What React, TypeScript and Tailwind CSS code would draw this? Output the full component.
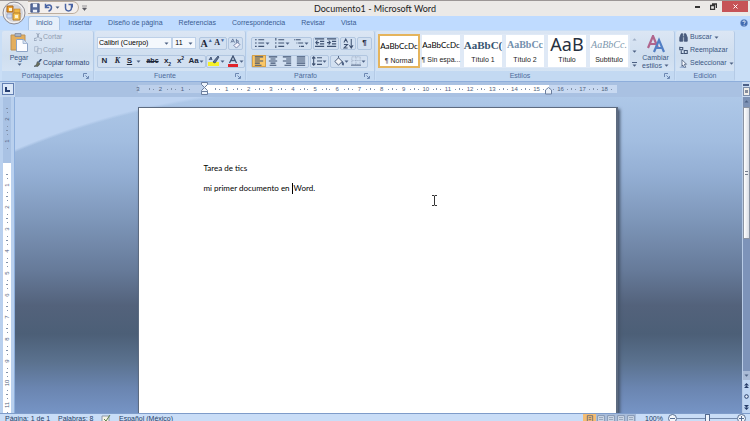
import type { ReactNode } from "react";

const tabs = [
  "Insertar",
  "Diseño de página",
  "Referencias",
  "Correspondencia",
  "Revisar",
  "Vista",
];

const styles = [
  { sample: "AaBbCcDc", name: "¶ Normal", look: "font-['Lato'] text-[8px] text-black" },
  { sample: "AaBbCcDc", name: "¶ Sin espa...", look: "font-['Lato'] text-[8px] text-black" },
  { sample: "AaBbC(", name: "Título 1", look: "font-['Liberation_Serif'] text-[11px] font-bold text-[#36546f]" },
  { sample: "AaBbCc", name: "Título 2", look: "font-['Liberation_Serif'] text-[10px] font-bold text-[#7390ad]" },
  { sample: "AaB", name: "Título", look: "font-['Noto_Sans'] text-[18px] text-[#26303f]" },
  { sample: "AaBbCc.", name: "Subtítulo", look: "font-['Liberation_Serif'] text-[10px] italic text-[#7d97ae]" },
];

const verticalUnits = [1, 2, 3, 4, 5, 6, 7, 8, 9, 10, 11];
const horizontalUnits = [1, 2, 3, 4, 5, 6, 7, 8, 9, 10, 11, 12, 13, 14, 15];

const Arrow = () => (
  <svg width="5" height="3" viewBox="0 0 5 3" className="shrink-0" aria-hidden="true">
    <path d="M0.5 0.5h4L2.5 2.7z" fill="#4d6184" />
  </svg>
);

const Icon = ({ size = 12, children }: { size?: number; children: ReactNode }) => (
  <svg
    width={size}
    height={size}
    viewBox="0 0 12 12"
    fill="none"
    stroke="#3f5272"
    className="shrink-0"
    aria-hidden="true"
  >
    {children}
  </svg>
);

type ToolProps = {
  label: string;
  width?: string;
  arrow?: boolean;
  active?: boolean;
  children: ReactNode;
};

const Tool = ({ label, width = "w-[13px]", arrow, active, children }: ToolProps) => (
  <button
    aria-label={label}
    className={`flex h-3 shrink-0 items-center justify-center text-[8px] font-bold text-[#1c2638] ${width} ${
      active ? "border border-[#d3a04c] bg-[#fbc766]" : ""
    }`}
  >
    {children}
    {arrow && <Arrow />}
  </button>
);

const ToolSet = ({ children }: { children: ReactNode }) => (
  <div className="flex h-[13px] shrink-0 items-center rounded-[2px] border border-[#b1c6e0] bg-[#d2e0f1]">
    {children}
  </div>
);

type GroupProps = {
  title: string;
  width: string;
  launcher?: boolean;
  children: ReactNode;
};

const Group = ({ title, width, launcher, children }: GroupProps) => (
  <section
    className={`flex flex-col rounded-[2px] border-r border-[#b4cae5] bg-linear-to-b from-[#dbe6f4] via-[#cfdeef] to-[#d9e7f7] ${width}`}
  >
    <div className="h-10 px-0.5">{children}</div>
    <footer className="flex h-[10px] items-center bg-[#c3d9f2] text-[#4c6a9a]">
      <span className="grow text-center">{title}</span>
      {launcher && (
        <button aria-label={`Opciones de ${title}`} className="mr-1">
          <svg width="6" height="6" viewBox="0 0 6 6" fill="none" stroke="#6d88b2">
            <path d="M.5 4V.5H4M2.5 2.5 5 5M5.5 3v2.5H3" />
          </svg>
        </button>
      )}
    </footer>
  </section>
);

const Lines = ({ d }: { d: string }) => (
  <Icon size={10}>
    <path d={d} strokeWidth="1.3" />
  </Icon>
);

const TitleBar = () => (
  <header className="flex h-4 items-start border-t border-[#9b9696] bg-[#ebe9e7]">
    <div className="flex w-1/4 items-center pl-7">
      <div className="flex h-[13px] w-[51px] items-center gap-1 rounded-r-full border border-l-0 border-[#bcae9f] bg-[#f3efed] pl-0.5">
        <button aria-label="Guardar">
          <Icon size={10}>
            <path d="M1 1h10v10H1z" fill="#596d9d" stroke="#3f4f7c" />
            <path d="M3.5 1h5v4h-5zM3.5 8h5v3h-5z" fill="#edf1fa" stroke="none" />
          </Icon>
        </button>
        <button aria-label="Deshacer" className="flex items-center gap-0.5">
          <Icon size={9}>
            <path d="M2 1v5h5M2 6c2-5 8-4 8 0 0 2-1 4-4 5" stroke="#4b65a4" strokeWidth="2" />
          </Icon>
          <Arrow />
        </button>
        <button aria-label="Rehacer">
          <Icon size={9}>
            <path d="M2 1v5c0 6 8 6 8 0V2M6 2h5v4" stroke="#4b65a4" strokeWidth="2" />
          </Icon>
        </button>
      </div>
      <button aria-label="Personalizar barra" className="ml-[3px]">
        <svg width="5" height="6" viewBox="0 0 5 6">
          <path d="M0 1h5M0.5 3h4L2.5 5.5z" stroke="#5b5b63" strokeWidth=".6" fill="#5b5b63" />
        </svg>
      </button>
    </div>
    <h1 className="grow text-center font-['Lato',sans-serif] text-[9px] leading-[15px] text-[#222]">
      Documento1 - Microsoft Word
    </h1>
    <div className="flex w-1/4 justify-end pr-0.5">
      <button aria-label="Minimizar" className="flex w-4 justify-center pt-[5px]">
        <span className="h-0.5 w-[5px] bg-[#333]" />
      </button>
      <button aria-label="Restaurar" className="flex w-[17px] justify-center pt-0.5">
        <svg width="7" height="7" viewBox="0 0 7 7" fill="none" stroke="#333">
          <path d="M.5 2.5h4v4h-4zM2 1h4.5v4" strokeWidth="1.3" />
        </svg>
      </button>
      <button aria-label="Cerrar" className="flex h-[11px] w-[26px] items-center justify-center bg-[#c65357]">
        <svg width="5" height="5" viewBox="0 0 5 5" stroke="#fff">
          <path d="M.5.5l4 4M4.5.5l-4 4" />
        </svg>
      </button>
    </div>
  </header>
);

const OfficeButton = () => (
  <button aria-label="Botón de Office" className="absolute top-px left-0.5">
    <svg width="24" height="24" viewBox="0 0 24 24" fill="none">
      <circle cx="12" cy="12" r="11" fill="#e4e3e5" stroke="#8d8c94" />
      <circle cx="12" cy="12" r="9.5" fill="#d4d4da" stroke="#f8f6f4" />
      <path d="M5 5h6v6H5z" fill="#eda42c" stroke="#a8621a" />
      <path d="M7 7h3v3H7z" fill="#fdf0cf" />
      <path d="M12 8h6v5h-6z" fill="#efb642" stroke="#c0802c" strokeWidth=".6" />
      <path d="M5 13h5v4H5z" fill="#d0dcf2" stroke="#8798bd" strokeWidth=".6" />
      <path d="M11 12h7v7h-7z" fill="#f5c456" stroke="#b27a29" />
      <path d="M13 14h3v3h-3z" fill="#fff2cc" />
    </svg>
  </button>
);

const TabBar = () => (
  <nav className="flex h-[14px] items-stretch bg-[#bfdbff] pl-7 text-[#3a5b92]">
    <button className="rounded-t-[3px] border border-b-0 border-[#a9c4e5] bg-[#e6effa] px-[7px]">
      Inicio
    </button>
    {tabs.map((tab) => (
      <button key={tab} className="px-2">
        {tab}
      </button>
    ))}
    <button aria-label="Ayuda" className="mr-0.5 ml-auto">
      <svg width="8" height="8" viewBox="0 0 8 8">
        <circle cx="4" cy="4" r="3.5" fill="#406bb2" stroke="#7896c6" strokeWidth=".5" />
        <path d="M2.8 3c0-1.6 2.5-1.5 2.5 0 0 .8-1.2.8-1.2 1.8M4.1 5.8v.8" stroke="#fff" fill="none" strokeWidth=".9" />
      </svg>
    </button>
  </nav>
);

const Clipboard = () => (
  <Group title="Portapapeles" width="w-[92px]" launcher>
    <div className="flex h-full">
      <button className="flex w-[30px] shrink-0 flex-col items-center gap-px pt-0.5 text-[#3a5682]">
        <svg width="18" height="19" viewBox="0 0 18 19" aria-hidden="true">
          <path d="M1 2h14v15H1z" fill="#e3ae5d" stroke="#bc9258" />
          <path d="M5 0.5h6v3H5z" fill="#a9b3c3" stroke="#788397" strokeWidth=".7" />
          <path d="M6.500 6.500h7l4 4v8h-11z" fill="#fbfcff" stroke="#8da4c6" />
          <path d="M13 6.500v4h4.500" fill="#d5e0f0" stroke="#8da4c6" strokeWidth=".7" />
        </svg>
        <span className="leading-[9px]">Pegar</span>
        <Arrow />
      </button>
      <div className="flex flex-col whitespace-nowrap">
        <button className="flex h-[13px] items-center gap-px text-[#8f9db2]">
          <Icon size={8}>
            <path d="M8 0 4 8M4 0l4 8M3 8a2 2 0 1 0 1 2M9 8a2 2 0 1 1-1 2" stroke="#8f9db2" strokeWidth="1.3" />
          </Icon>
          Cortar
        </button>
        <button className="flex h-[13px] items-center gap-px text-[#8f9db2]">
          <Icon size={8}>
            <path d="M1 1h5v7H1zM5 4h6v7H5z" fill="#dce5f1" stroke="#9cabc1" />
          </Icon>
          Copiar
        </button>
        <button className="flex h-[13px] items-center gap-px text-[#2c4674]">
          <Icon size={8}>
            <path d="M11 0 7 5" stroke="#3a5379" strokeWidth="2.5" />
            <path d="M5 4l4 3-3 4H0c3-1 4-3 5-7z" fill="#6b715c" stroke="#454f54" />
          </Icon>
          Copiar formato
        </button>
      </div>
    </div>
  </Group>
);

const FontGroup = () => (
  <Group title="Fuente" width="w-[151px]" launcher>
    <div className="flex h-full flex-col justify-between pt-1.5 pb-[3px]">
      <div className="flex items-center">
        <label className="flex h-3 w-20 items-center border border-[#bdd0e8] bg-[#f4f8fd] pr-0.5 text-black">
          <input
            aria-label="Fuente"
            defaultValue="Calibri (Cuerpo)"
            className="w-full min-w-0 bg-transparent pl-px outline-none"
          />
          <Arrow />
        </label>
        <label className="flex h-3 w-[25px] items-center border border-[#bdd0e8] bg-[#f4f8fd] pr-0.5 text-black">
          <input
            aria-label="Tamaño de fuente"
            defaultValue="11"
            className="w-full min-w-0 bg-transparent pl-0.5 outline-none"
          />
          <Arrow />
        </label>
        <div className="ml-[3px] flex gap-px">
          <ToolSet>
            <Tool label="Agrandar fuente">
              <span className="font-['Liberation_Serif'] text-[10px]">A</span>
              <span className="self-start text-[5px] leading-[6px] text-[#46669c]">▲</span>
            </Tool>
            <Tool label="Encoger fuente">
              <span className="font-['Liberation_Serif'] text-[8px]">A</span>
              <span className="self-start text-[5px] leading-[6px] text-[#46669c]">▼</span>
            </Tool>
          </ToolSet>
          <ToolSet>
            <Tool label="Borrar formato">
              <Icon size={11}>
                <path d="M1 5l2-4 2 4M2 4h2M7 1v4h2V3H7" stroke="#596c92" strokeWidth=".9" />
                <path d="M4 8l4-3 3 2-4 4z" fill="#f3f1fb" stroke="#7685a9" />
              </Icon>
            </Tool>
          </ToolSet>
        </div>
      </div>
      <div className="flex items-center justify-between">
        <ToolSet>
          <Tool label="Negrita">N</Tool>
          <Tool label="Cursiva">
            <em className="font-['Liberation_Serif']">K</em>
          </Tool>
          <Tool label="Subrayado" width="w-[20px]">
            <span className="mr-1 underline">S</span>
            <Arrow />
          </Tool>
          <Tool label="Tachado" width="w-[17px]">
            <s className="text-[7px]">abc</s>
          </Tool>
          <Tool label="Subíndice">
            x<span className="self-end text-[5px] leading-[6px]">2</span>
          </Tool>
          <Tool label="Superíndice">
            x<span className="self-start text-[5px] leading-[6px]">2</span>
          </Tool>
          <Tool label="Cambiar mayúsculas" width="w-[18px]" arrow>
            Aa
          </Tool>
        </ToolSet>
        <ToolSet>
          <Tool label="Color de resaltado" width="w-[19px]" arrow>
            <Icon>
              <path d="M0 7h11v4H0z" fill="#f5f02a" stroke="none" />
              <path d="M1 5l2-3 1 3M5 7l5-6 1 1-4 6z" fill="#607292" strokeWidth=".9" />
            </Icon>
          </Tool>
          <Tool label="Color de fuente" width="w-[18px]" arrow>
            <Icon>
              <path d="M2.500 8 6 1l3.500 7M4 5.500h4" strokeWidth="1.3" />
              <path d="M1 9h10v3H1z" fill="#e0232b" stroke="none" />
            </Icon>
          </Tool>
        </ToolSet>
      </div>
    </div>
  </Group>
);

const ParagraphGroup = () => (
  <Group title="Párrafo" width="w-[128px]" launcher>
    <div className="flex h-full flex-col justify-between pt-1.5 pb-[3px] pl-0.5">
      <div className="flex items-center gap-px">
        <ToolSet>
          <Tool label="Viñetas" width="w-[20px]" arrow>
            <Lines d="M0 2h2M0 6h2M0 10h2M4 2h7M4 6h7M4 10h7" />
          </Tool>
          <Tool label="Numeración" width="w-[20px]" arrow>
            <Lines d="M1 0v3M1 5v2M1 9v3M4 2h7M4 6h7M4 10h7" />
          </Tool>
          <Tool label="Lista multinivel" width="w-[19px]" arrow>
            <Lines d="M0 2h1M2 2h6M3 6h1M5 6h6M6 10h1M8 10h4" />
          </Tool>
        </ToolSet>
        <ToolSet>
          <Tool label="Disminuir sangría" width="w-[12px]">
            <Lines d="M0 1h11M6 4h5M6 7h5M0 10h11M5 5.500H1M3 3 1 5.500 3 8" />
          </Tool>
          <Tool label="Aumentar sangría" width="w-[12px]">
            <Lines d="M0 1h11M6 4h5M6 7h5M0 10h11M0 5.500h4M2 3l2 2.500L2 8" />
          </Tool>
        </ToolSet>
        <ToolSet>
          <Tool label="Ordenar" width="w-[14px]">
            <Icon size={11}>
              <path d="M1 5l2-4 2 4M1 7h4l-4 4h4M9 1v10M7 8l2 3 2-3" strokeWidth="1.100" />
            </Icon>
          </Tool>
        </ToolSet>
        <ToolSet>
          <Tool label="Mostrar todo">¶</Tool>
        </ToolSet>
      </div>
      <div className="flex items-center gap-px">
        <ToolSet>
          <Tool label="Alinear a la izquierda" width="w-[14px]" active>
            <Lines d="M1 1h10M1 3.500h6M1 6h10M1 8.500h6M1 11h8" />
          </Tool>
          <Tool label="Centrar" width="w-[14px]">
            <Lines d="M1 1h10M3 3.500h6M1 6h10M3 8.500h6M2 11h8" />
          </Tool>
          <Tool label="Alinear a la derecha" width="w-[14px]">
            <Lines d="M1 1h10M5 3.500h6M1 6h10M5 8.500h6M3 11h8" />
          </Tool>
          <Tool label="Justificar" width="w-[14px]">
            <Lines d="M1 1h10M1 3.500h10M1 6h10M1 8.500h10M1 11h10" />
          </Tool>
        </ToolSet>
        <ToolSet>
          <Tool label="Interlineado" width="w-[17px]" arrow>
            <Lines d="M2 1v10M0 3l2-2 2 2M0 9l2 2 2-2M6 2h6M6 6h6M6 10h6" />
          </Tool>
        </ToolSet>
        <ToolSet>
          <Tool label="Sombreado" width="w-[19px]" arrow>
            <Icon size={11}>
              <path d="M2 6l4-4 4 4-4 4zM6 2V0" fill="#f1f3f7" />
              <path d="M10 6c2 2 2 4 1 4s-1-2-1-4z" fill="#506ca2" />
            </Icon>
          </Tool>
          <Tool label="Bordes" width="w-[17px]" arrow>
            <Icon size={10}>
              <path d="M1 1h10v9H1zM6 1v9M1 5.500h10" stroke="#93a2ba" strokeDasharray="1 1" />
              <path d="M0 11h12" />
            </Icon>
          </Tool>
        </ToolSet>
      </div>
    </div>
  </Group>
);

const StylesGroup = () => (
  <Group title="Estilos" width="w-[299px]" launcher>
    <div className="flex h-full pt-[3px]">
      <div className="flex h-[34px] bg-[#e7effa]">
        {styles.map(({ sample, name, look }, i) => (
          <button
            key={name}
            className={`flex w-[42px] flex-col items-center bg-white text-[#222] ${
              i === 0 ? "border-2 border-[#e5b45c]" : "border-x-2 border-y border-[#dfe9f6]"
            }`}
          >
            <span className={`flex h-5 items-center whitespace-nowrap ${look}`}>{sample}</span>
            <span className="leading-[9px] whitespace-nowrap">{name}</span>
          </button>
        ))}
      </div>
      <div className="flex w-[9px] flex-col items-center justify-between py-1">
        <button aria-label="Fila anterior" className="rotate-180 opacity-40">
          <Arrow />
        </button>
        <button aria-label="Fila siguiente">
          <Arrow />
        </button>
        <button aria-label="Más estilos" className="border-t border-[#4d6184] pt-px">
          <Arrow />
        </button>
      </div>
      <button className="flex grow flex-col items-center pt-px leading-[8px] text-[#3a5682]">
        <svg width="18" height="18" viewBox="0 0 18 18" fill="none" className="mb-px" aria-hidden="true">
          <path d="M1 13 6 1l5 12M3 9h6" stroke="#b0658d" strokeWidth="2.200" />
          <path d="M7 17l5-12 5 12M9 13h6" stroke="#527fc5" strokeWidth="2.200" />
        </svg>
        <span>Cambiar</span>
        <span className="flex items-center gap-0.5">
          estilos <Arrow />
        </span>
      </button>
    </div>
  </Group>
);

const EditGroup = () => (
  <Group title="Edición" width="w-[59px]">
    <div className="flex flex-col text-[#3a5682]">
      <button className="flex h-[13px] items-center gap-0.5 pl-px">
        <Icon size={9}>
          <path d="M1 11V6l2-5h2v10zM7 11V1h2l2 5v5zM5 5h2" fill="#4b5d80" />
        </Icon>
        Buscar
        <Arrow />
      </button>
      <button className="flex h-[13px] items-center gap-0.5 pl-px">
        <Icon size={9}>
          <path d="M1 1v4h4V2H1M3 6v4h3M7 6h4v4H7z" strokeWidth="1.400" />
        </Icon>
        Reemplazar
      </button>
      <button className="flex h-[13px] items-center gap-0.5 pl-px">
        <Icon size={9}>
          <path d="M4 1l6 6H7l2 4-2 .5L5 8l-1 2z" fill="#f8fbff" />
          <path d="M1 11h7" stroke="#7493c2" />
        </Icon>
        Seleccionar
        <Arrow />
      </button>
    </div>
  </Group>
);

const Ribbon = () => (
  <div className="flex h-[52px] gap-px border-b border-[#8eaedb] bg-[#c9def6] px-0.5 pt-px">
    <Clipboard />
    <FontGroup />
    <ParagraphGroup />
    <StylesGroup />
    <EditGroup />
  </div>
);

const RulerUnit = ({ value, width = "flex-1" }: { value: number; width?: string }) => (
  <span className={`flex items-center justify-between ${width}`}>
    <i className="h-0.5 w-px bg-[#8292ab]" />
    <i className="h-px w-px bg-[#8292ab]" />
    <span className="w-2 text-center">{value}</span>
    <i className="h-px w-px bg-[#8292ab]" />
    <i />
  </span>
);

const HorizontalRuler = () => (
  <div className="flex h-[15px] bg-[#a9c1e2]">
    <div className="flex w-[15px] items-center justify-center bg-[#c5d8f0]">
      <button
        aria-label="Tabulación izquierda"
        className="flex size-3 items-center justify-center border border-[#6480b3] bg-[#dce8f8]"
      >
        <span className="size-[5px] border-b-2 border-l-2 border-[#263e70]" />
      </button>
    </div>
    <div className="flex grow items-center justify-center pr-0.5 text-[6px] leading-[8px] text-[#50627e]">
      <div className="flex h-2 w-[66px] bg-[#bdd0eb]">
        <span className="-ml-1 w-2 text-center">3</span>
        <span className="w-[7px]" />
        <RulerUnit value={2} width="w-[22px]" />
        <RulerUnit value={1} width="w-[22px]" />
      </div>
      <div className="relative flex h-2 w-[345px] bg-white pr-0.5 pl-[11px]">
        {horizontalUnits.map((n) => (
          <RulerUnit key={n} value={n} />
        ))}
        <svg width="7" height="13" viewBox="0 0 7 13" className="absolute -top-[3px] -left-[3px]">
          <path
            d="M.5.5h6v2l-3 3-3-3zM.5 9.500v-1l3-3 3 3v1zM.5 9.500h6v3h-6z"
            fill="#edf3fb"
            stroke="#6b7e9e"
          />
        </svg>
        <svg width="7" height="8" viewBox="0 0 7 8" className="absolute top-0.5 -right-[3px]">
          <path d="M.5 4v-1l3-2.500 3 2.500v4h-6z" fill="#edf3fb" stroke="#6b7e9e" />
        </svg>
      </div>
      <div className="flex h-2 w-[68px] bg-[#c8d9f1]">
        <RulerUnit value={16} width="w-[22px]" />
        <RulerUnit value={17} width="w-[22px]" />
        <RulerUnit value={18} width="w-[22px]" />
      </div>
    </div>
    <div className="flex w-2 flex-col items-center gap-px bg-[#c9daf1] pt-0.5">
      <span className="h-0.5 w-[6px] bg-[#4b5f87]" />
      <button aria-label="Regla" className="h-[9px] w-[7px] border border-[#7f8faa] bg-[#f0ede7]">
        <span className="mx-auto block h-[3px] w-[3px] bg-[#858c9c]" />
      </button>
    </div>
  </div>
);

const VerticalUnit = ({ value }: { value: number }) => (
  <span className="flex h-[22px] shrink-0 flex-col items-center justify-between">
    <i className="h-px w-0.5 bg-[#8292ab]" />
    <i className="size-px bg-[#8292ab]" />
    <span className="h-2 -rotate-90">{value}</span>
    <i className="size-px bg-[#8292ab]" />
    <i />
  </span>
);

const VerticalRuler = () => (
  <div className="flex w-[15px] shrink-0 flex-col overflow-hidden border-r border-[#8daedb] bg-[#b9d0ee] px-[3px] text-[6px] leading-[8px] text-[#50627e]">
    <div className="flex h-[66px] shrink-0 flex-col bg-[#a9c2e4] pt-[11px]">
      <VerticalUnit value={2} />
      <VerticalUnit value={1} />
    </div>
    <div className="flex min-h-0 grow flex-col bg-white pt-[11px]">
      {verticalUnits.map((n) => (
        <VerticalUnit key={n} value={n} />
      ))}
    </div>
  </div>
);

const Scrollbar = () => (
  <div className="flex w-2 shrink-0 flex-col items-center border-l border-[#b8cbe6] bg-[#7d93b9]">
    <button aria-label="Subir" className="flex h-[10px] w-full rotate-180 items-center justify-center bg-[#7c91b4]">
      <Arrow />
    </button>
    <div className="flex h-[132px] w-full items-center justify-center border border-[#8b94a3] bg-linear-to-r from-white to-[#d9dde5]">
      <span className="h-1 w-[3px] border-y border-[#737c8c]" />
    </div>
    <div className="grow" />
    <button aria-label="Bajar" className="flex h-[9px] w-full items-center justify-center bg-[#a9bad5]">
      <Arrow />
    </button>
    <div className="flex h-[33px] w-full flex-col items-center justify-around bg-[#bfd5f2]">
      <button aria-label="Página anterior" className="rotate-180">
        <svg width="5" height="5" viewBox="0 0 5 5" fill="#263c68">
          <path d="M0 0h5L2.500 2.500zM0 2.500h5L2.500 5z" />
        </svg>
      </button>
      <button aria-label="Seleccionar objeto">
        <svg width="5" height="5" viewBox="0 0 5 5">
          <circle cx="2.500" cy="2.500" r="1.800" fill="#e0eafa" stroke="#263c68" />
        </svg>
      </button>
      <button aria-label="Página siguiente">
        <svg width="5" height="5" viewBox="0 0 5 5" fill="#263c68">
          <path d="M0 0h5L2.500 2.500zM0 2.500h5L2.500 5z" />
        </svg>
      </button>
    </div>
  </div>
);

const Workspace = () => (
  <main className="flex min-h-0 grow">
    <VerticalRuler />
    <div className="flex grow justify-center overflow-hidden bg-[radial-gradient(circle_at_310px_793px,transparent_800px,#bdd3f1_803px),linear-gradient(#aec8e8,#a2bde0_14%,#93aed3_25%,#7f98bb_38%,#667a99_55%,#53627b_66%,#4c5f77_75%,#5b728f_84%,#6a85b0_92%,#7694c5)] bg-[size:200px_100%,100%_100%] bg-no-repeat pt-[10px] pr-0.5">
      <article className="w-[480px] border-t border-r-2 border-l border-[#5d6b80] bg-white pt-[50px] pl-[65px] font-['Lato',sans-serif] text-[8px] leading-5 text-black shadow-[2px_2px_3px_#46546b]">
        <p>Tarea de tics</p>
        <p>
          mi primer documento en
          <span className="mr-px ml-0.5 inline-block h-[11px] w-px bg-black align-middle" />
          Word.
        </p>
      </article>
    </div>
    <Scrollbar />
  </main>
);

const TextPointer = () => (
  <svg
    width="5"
    height="11"
    viewBox="0 0 5 11"
    fill="none"
    stroke="#333"
    className="absolute top-[195px] left-[432px]"
    aria-hidden="true"
  >
    <path d="M0 .5h2l.5.500.5-.500h2M2.500 1v9M0 10.500h2l.5-.500.5.500h2" />
  </svg>
);

const StatusBar = () => (
  <footer className="flex h-2 shrink-0 items-start border-t border-[#7e9cca] bg-[#c9ddf7] pl-[5px] leading-[10px] text-[#263e66]">
    <span className="w-[53px]">Página: 1 de 1</span>
    <span className="w-[43px]">Palabras: 8</span>
    <svg width="10" height="10" viewBox="0 0 10 10" fill="none" aria-hidden="true">
      <path d="M1 2h7v7H1z" fill="#f4f2e6" stroke="#8b98a9" />
      <path d="M3 5l2 2 4-6" stroke="#5c8148" />
    </svg>
    <span className="ml-2 grow">Español (México)</span>
    <div className="flex bg-[#a9bddb]">
      <button aria-label="Diseño de impresión" className="flex h-3 w-[13px] justify-center bg-[#f4bd74] pt-px">
        <Icon size={8}>
          <path d="M2 1h8v10H2zM4 4h4M4 7h4" />
        </Icon>
      </button>
      {["Lectura", "Diseño web", "Esquema", "Borrador"].map((view) => (
        <button key={view} aria-label={view} className="flex h-3 w-[10px] justify-center pt-px">
          <Icon size={8}>
            <path d="M1 1h10v10H1zM3 4h6M3 7h6" fill="#d5dfec" stroke="#6b7e9c" />
          </Icon>
        </button>
      ))}
    </div>
    <button className="ml-1 w-7">100%</button>
    <button aria-label="Alejar">
      <svg width="9" height="9" viewBox="0 0 9 9" fill="#f3f6fb" stroke="#566c90">
        <circle cx="4.500" cy="4.500" r="4" />
        <path d="M2 4.500h5" />
      </svg>
    </button>
    <input
      type="range"
      aria-label="Zoom"
      className="h-2 w-[60px] appearance-none bg-[linear-gradient(#7389ac,#7389ac)] bg-[size:100%_1px] bg-center bg-no-repeat [&::-webkit-slider-thumb]:h-2 [&::-webkit-slider-thumb]:w-[5px] [&::-webkit-slider-thumb]:appearance-none [&::-webkit-slider-thumb]:border [&::-webkit-slider-thumb]:border-[#566c90] [&::-webkit-slider-thumb]:bg-[#eff4fb]"
    />
    <button aria-label="Acercar" className="mr-1">
      <svg width="9" height="9" viewBox="0 0 9 9" fill="#f3f6fb" stroke="#566c90">
        <circle cx="4.500" cy="4.500" r="4" />
        <path d="M2 4.500h5M4.500 2v5" />
      </svg>
    </button>
  </footer>
);

export default function App() {
  return (
    <div className="relative flex h-screen flex-col overflow-hidden font-['Liberation_Sans',sans-serif] text-[7px]">
      <TitleBar />
      <TabBar />
      <Ribbon />
      <HorizontalRuler />
      <Workspace />
      <StatusBar />
      <OfficeButton />
      <TextPointer />
    </div>
  );
}
